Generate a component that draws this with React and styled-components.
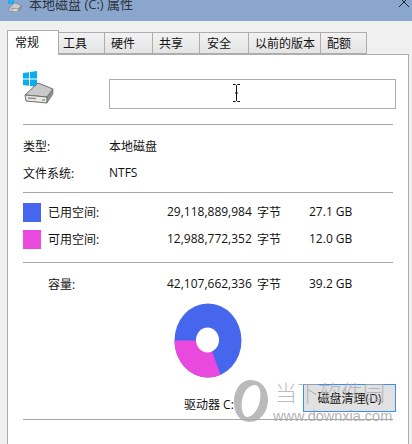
import React from 'react';
import styled, { createGlobalStyle } from 'styled-components';

const Global = createGlobalStyle`
  html, body { margin: 0; padding: 0; background: #f0f0f0; }
  #root { width: 412px; height: 444px; overflow: hidden; }
  * { box-sizing: border-box; }
`;

const Win = styled.div`
  position: relative;
  width: 412px;
  height: 444px;
  overflow: hidden;
  background: #f0f0f0;
  font-family: "Open Sans", "Noto Sans CJK SC", sans-serif;
  font-size: 12px;
  color: #111;
`;
const TitleBar = styled.div`
  height: 21px;
  background: #8ba6cc;
  display: flex;
  align-items: flex-end;
  padding: 0 2px 8px 8px;
`;
const TitleIcon = styled.svg`
  width: 16px;
  height: 16px;
  flex: none;
  margin-right: 5px;
`;
const TitleText = styled.div`
  font-size: 13px;
  line-height: 17px;
  color: #2c3440;
  flex: 1;
  white-space: nowrap;
`;
const Close = styled.svg`
  width: 12px;
  height: 12px;
  flex: none;
  margin-bottom: 5px;
`;
const Tabs = styled.div`
  display: flex;
  align-items: flex-end;
  height: 33px;
  padding: 9px 0 0 7px;
  position: relative;
  z-index: 1;
`;
const Tab = styled.div`
  width: ${p => p.$w}px;
  height: ${p => (p.$active ? 25 : 22)}px;
  margin-bottom: ${p => (p.$active ? -1 : 0)}px;
  background: ${p => (p.$active ? '#fff' : 'linear-gradient(#f2f2f2, #e4e4e4)')};
  border: 1px solid #adadad;
  border-bottom: ${p => (p.$active ? 'none' : '1px solid #adadad')};
  border-left-width: ${p => (p.$active ? 1 : 0)}px;
  display: flex;
  align-items: center;
  padding-left: ${p => p.$pad}px;
  padding-bottom: ${p => (p.$active ? 3 : 0)}px;
  white-space: nowrap;
`;
const Panel = styled.div`
  width: 402px;
  height: 390px;
  margin-left: 7px;
  background: #fff;
  border: 1px solid #adadad;
  border-bottom: none;
  padding: 0 15px;
  display: flex;
  flex-direction: column;
`;
const Header = styled.div`
  height: 69px;
  display: flex;
  padding-top: 15px;
`;
const DriveIcon = styled.svg`
  width: 36px;
  height: 36px;
  flex: none;
  margin-right: 50px;
`;
const NameBox = styled.div`
  width: 287px;
  height: 30px;
  flex: none;
  margin-top: 9px;
  background: #fff;
  border: 1px solid #adadad;
`;
const Rule = styled.div`
  height: 1px;
  background: #a6a6a6;
  flex: none;
`;
const Info = styled.div`
  height: 67px;
  padding-top: 7px;
`;
const InfoRow = styled.div`
  height: 27px;
  display: grid;
  grid-template-columns: 86px 1fr;
  align-items: center;
`;
const Usage = styled.div`
  height: 69px;
  padding-top: 5px;
`;
const UsageRow = styled.div`
  height: 27px;
  display: grid;
  grid-template-columns: 25px 119px 90px 52px 1fr;
  align-items: center;
  white-space: nowrap;
`;
const Swatch = styled.div`
  width: 18px;
  height: 19px;
  margin-top: 2px;
  background: ${p => p.$c};
`;
const Capacity = styled(UsageRow)`
  margin-top: 7px;
`;
const Bottom = styled.div`
  height: 156px;
  display: flex;
  flex-direction: column;
`;
const Pie = styled.svg`
  width: 68px;
  height: 75px;
  margin: 6px 0 0 151px;
  flex: none;
`;
const DriveRow = styled.div`
  display: flex;
  align-items: flex-start;
  padding: 6px 0 0 161px;
`;
const DriveLabel = styled.div`
  margin-top: 11px;
  width: 119px;
  flex: none;
  white-space: nowrap;
`;
const CleanButton = styled.button`
  width: 93px;
  height: 28px;
  flex: none;
  background: #e1e1e1;
  border: 1px solid #3c8fe8;
  font: inherit;
  color: #111;
  padding: 0;
`;
const Cursor = styled.svg`
  position: absolute;
  left: 232px;
  top: 84px;
  width: 9px;
  height: 18px;
  z-index: 3;
`;
const Watermark = styled.div`
  position: absolute;
  left: 233px;
  top: 379px;
  display: flex;
  gap: 6px;
  pointer-events: none;
  z-index: 2;
`;
const WmLogo = styled.svg`
  width: 36px;
  height: 44px;
`;
const WmText = styled.div`
  display: flex;
  flex-direction: column;
  color: #a8a8a8;
`;
const WmCn = styled.div`
  font-size: 22px;
  line-height: 26px;
  white-space: nowrap;
  font-weight: 300;
  opacity: .75;
`;
const WmUrl = styled.div`
  font-family: "Liberation Sans", sans-serif;
  font-size: 14.5px;
  line-height: 14px;
  margin-top: 4px;
  margin-left: -2px;
  white-space: nowrap;
  opacity: .85;
`;

const tabs = [
  ['常规', 52, 7], ['工具', 46, 4], ['硬件', 48, 6], ['共享', 47, 6], ['安全', 49, 7], ['以前的版本', 72, 6], ['配额', 46, 6],
];

const usage = [
  ['#4766ee', '已用空间:', '29,118,889,984', '字节', '27.1 GB'],
  ['#ea49dd', '可用空间:', '12,988,772,352', '字节', '12.0 GB'],
];

const DiskGlyph = () => (
  <>
    <path d="M2 25 L15 13 L30 19 L24 27 Z" fill="#c9c9c9" stroke="#6f6f6f" strokeWidth="1" />
    <path d="M2 25 L24 27 L24 33 L3 31 Z" fill="#e8e8e8" stroke="#6f6f6f" strokeWidth="1" />
    <path d="M24 27 L30 19 L30 24 L24 33 Z" fill="#8f8f8f" stroke="#6f6f6f" strokeWidth=".6" />
    <path d="M5 28 L13 28.6" stroke="#8a8a8a" strokeWidth="1.4" />
    <rect x="19" y="29.4" width="3" height="1.3" fill="#5fae5f" />
  </>
);

const WinFlag = () => (
  <g fill="#0aaef0">
    <path d="M0 3 L6 2.2 V8.5 H0 Z" />
    <path d="M7 2 L14 1 V8.5 H7 Z" />
    <path d="M0 9.5 H6 V15.8 L0 15 Z" />
    <path d="M7 9.5 H14 V17 L7 16 Z" />
  </g>
);

export default function App() {
  return (
    <Win>
      <Global />
      <TitleBar>
        <TitleIcon viewBox="0 0 36 36">
          <WinFlag />
          <DiskGlyph />
        </TitleIcon>
        <TitleText>本地磁盘 (C:) 属性</TitleText>
        <Close viewBox="0 0 12 12">
          <path d="M1 1 L11 11 M11 1 L1 11" stroke="#20242c" strokeWidth="1" />
        </Close>
      </TitleBar>
      <Tabs>
        {tabs.map(([t, w, pad], i) => (
          <Tab key={t} $w={w} $pad={pad} $active={i === 0}>{t}</Tab>
        ))}
      </Tabs>
      <Panel>
        <Header>
          <DriveIcon viewBox="0 0 36 36">
            <WinFlag />
            <DiskGlyph />
          </DriveIcon>
          <NameBox />
        </Header>
        <Rule />
        <Info>
          <InfoRow><span>类型:</span><span>本地磁盘</span></InfoRow>
          <InfoRow><span>文件系统:</span><span>NTFS</span></InfoRow>
        </Info>
        <Rule />
        <Usage>
          {usage.map(([c, label, bytes, unit, gb]) => (
            <UsageRow key={label}>
              <Swatch $c={c} />
              <span>{label}</span>
              <span>{bytes}</span>
              <span>{unit}</span>
              <span>{gb}</span>
            </UsageRow>
          ))}
        </Usage>
        <Rule />
        <Bottom>
          <Capacity>
            <span />
            <span>容量:</span>
            <span>42,107,662,336</span>
            <span>字节</span>
            <span>39.2 GB</span>
          </Capacity>
          <Pie viewBox="0 0 68 75">
            <ellipse cx="34" cy="37.5" rx="33.5" ry="37" fill="#4766ee" />
            <path d="M0.5 37.5 L34 37.5 L46.5 71.8 A33.5 37 0 0 1 0.5 37.5 Z" fill="#ea49dd" />
            <ellipse cx="33.5" cy="37" rx="11.5" ry="12.5" fill="#fff" />
          </Pie>
          <DriveRow>
            <DriveLabel>驱动器 C:</DriveLabel>
            <CleanButton>磁盘清理(D)</CleanButton>
          </DriveRow>
        </Bottom>
        <Rule />
      </Panel>
      <Cursor viewBox="0 0 9 18">
        <path d="M1 .5 H3.5 L4.5 1.5 L5.5 .5 H8 M4.5 1.5 V16.5 M1 17.5 H3.5 L4.5 16.5 L5.5 17.5 H8 M3 9 H6" stroke="#111" strokeWidth="1" fill="none" />
      </Cursor>
      <Watermark>
        <WmLogo viewBox="0 0 37 45">
          <path fillRule="evenodd" d="M18 1 C29 1 36 10 36 21 C36 34 28 44 17 44 C7 44 1 35 1 24 C1 11 8 1 18 1 Z M22 6 C14 7 10 15 9 24 C8 32 11 39 15 39 C22 38 27 29 28 20 C29 12 27 6 22 6 Z" fill="#a9a9a9" opacity=".8" />
        </WmLogo>
        <WmText>
          <WmCn>当下软件园</WmCn>
          <WmUrl>www.downxia.com</WmUrl>
        </WmText>
      </Watermark>
    </Win>
  );
}
